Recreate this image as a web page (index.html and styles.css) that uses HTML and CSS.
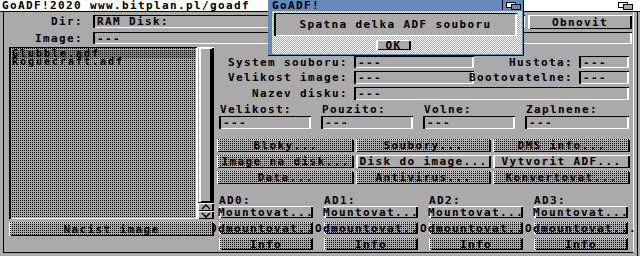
FILE: index.html
```html
<!DOCTYPE html>
<html lang="cs">
<head>
    <meta charset="UTF-8">
    <meta name="viewport" content="width=device-width, initial-scale=1.0">
    <title>GoADF!2020</title>
    <link rel="stylesheet" href="styles.css">
</head>
<body>
<div class="screen">

    <!-- Main window -->
    <div class="window main-window">
        <div class="titlebar">
            <span class="title">GoADF!2020 www.bitplan.pl/goadf</span>
            <span class="depth">
                <svg width="15" height="8" viewBox="0 0 15 8"><rect x="0.5" y="0.5" width="9" height="5" fill="#fff" stroke="#000"/><rect x="5.5" y="2.5" width="9" height="5" fill="#aaa" stroke="#000"/></svg>
            </span>
        </div>
        <div class="frame">
            <div class="body">

                <!-- Dir / Image -->
                <div class="top-grid">
                    <span class="lbl">Dir:</span>
                    <div class="dir-row">
                        <div class="field">RAM Disk:</div>
                        <div class="btn obnovit">Obnovit</div>
                    </div>
                    <span class="lbl">Image:</span>
                    <div class="field">---</div>
                </div>

                <div class="main-area">
                    <!-- File list -->
                    <div class="left-pane">
                        <div class="listview">
                            <div class="list">
                                <div class="item selected">Glubble.adf</div>
                                <div class="item">Roguecraft.adf</div>
                            </div>
                            <div class="scroller">
                                <div class="track"><div class="knob"></div></div>
                                <div class="arrow">
                                    <svg width="10" height="6" viewBox="0 0 10 6"><polyline points="1,5 5,1 9,5" fill="none" stroke="#000" stroke-width="1.5"/></svg>
                                </div>
                                <div class="arrow">
                                    <svg width="10" height="6" viewBox="0 0 10 6"><polyline points="1,1 5,5 9,1" fill="none" stroke="#000" stroke-width="1.5"/></svg>
                                </div>
                            </div>
                        </div>
                        <div class="btn ghost load">Nacist image</div>
                    </div>

                    <!-- Disk info -->
                    <div class="right-pane">
                        <div class="info-grid">
                            <span class="lbl">System souboru:</span>
                            <div class="field">---</div>
                            <span class="lbl">Hustota:</span>
                            <div class="field">---</div>

                            <span class="lbl">Velikost image:</span>
                            <div class="field">---</div>
                            <span class="lbl">Bootovatelne:</span>
                            <div class="field">---</div>

                            <span class="lbl">Nazev disku:</span>
                            <div class="field wide">---</div>
                        </div>

                        <div class="sizes">
                            <span class="cap">Velikost:</span>
                            <span class="cap">Pouzito:</span>
                            <span class="cap">Volne:</span>
                            <span class="cap">Zaplnene:</span>
                            <div class="field">---</div>
                            <div class="field">---</div>
                            <div class="field">---</div>
                            <div class="field">---</div>
                        </div>

                        <div class="actions">
                            <div class="btn ghost">Bloky...</div>
                            <div class="btn ghost">Soubory...</div>
                            <div class="btn ghost">DMS info...</div>
                            <div class="btn ghost">Image na disk...</div>
                            <div class="btn">Disk do image...</div>
                            <div class="btn">Vytvorit ADF...</div>
                            <div class="btn ghost">Data...</div>
                            <div class="btn ghost">Antivirus...</div>
                            <div class="btn ghost">Konvertovat...</div>
                        </div>

                        <div class="drives">
                            <div class="drive">
                                <span class="cap">AD0:</span>
                                <div class="btn">Mountovat...</div>
                                <div class="btn ghost">Odmountovat...</div>
                                <div class="btn ghost">Info</div>
                            </div>
                            <div class="drive">
                                <span class="cap">AD1:</span>
                                <div class="btn">Mountovat...</div>
                                <div class="btn ghost">Odmountovat...</div>
                                <div class="btn ghost">Info</div>
                            </div>
                            <div class="drive">
                                <span class="cap">AD2:</span>
                                <div class="btn">Mountovat...</div>
                                <div class="btn ghost">Odmountovat...</div>
                                <div class="btn ghost">Info</div>
                            </div>
                            <div class="drive">
                                <span class="cap">AD3:</span>
                                <div class="btn">Mountovat...</div>
                                <div class="btn ghost">Odmountovat...</div>
                                <div class="btn ghost">Info</div>
                            </div>
                        </div>
                    </div>
                </div>

            </div>
        </div>
    </div>

    <!-- Requester -->
    <div class="window dialog">
        <div class="dlg-title">
            <span class="title">GoADF!</span>
            <span class="dlg-depth">
                <svg width="15" height="8" viewBox="0 0 15 8"><rect x="0.5" y="0.5" width="9" height="5" fill="#fff" stroke="#000"/><rect x="5.5" y="2.5" width="9" height="5" fill="#6688bb" stroke="#000"/></svg>
            </span>
        </div>
        <div class="dlg-body">
            <div class="message">Spatna delka ADF souboru</div>
            <div class="btn ok">OK</div>
        </div>
    </div>

</div>
</body>
</html>
```

FILE: styles.css
```css
/* Amiga Workbench look: topaz-like mono font, 4 colour palette */
* {
    margin: 0;
    padding: 0;
    box-sizing: border-box;
}

body {
    background: #aaaaaa;
    color: #000;
    font-family: "DejaVu Sans Mono", "Liberation Mono", monospace;
    font-weight: bold;
    font-size: 11px;
    letter-spacing: 1.38px;
    line-height: 9px;
    overflow: hidden;
}

.screen {
    position: relative;
    width: 640px;
    height: 256px;
    background: #aaaaaa;
    overflow: hidden;
}

.window {
    position: absolute;
    top: 0;
}

/* Main window */
.main-window {
    left: 0;
    width: 640px;
    height: 256px;
}

.titlebar {
    display: flex;
    justify-content: space-between;
    height: 12px;
    padding: 1px 7px 0 2px;
    background: #fff;
    border-bottom: 1px solid #000;
    white-space: nowrap;
}

.depth {
    display: flex;
    padding-top: 1px;
}

.frame {
    width: 638px;
    height: 244px;
    border-right: 1px solid #000;
}

.body {
    height: 241px;
    margin: 0 3px;
    border-left: 1px solid #000;
    border-right: 1px solid #fff;
    border-bottom: 1px solid #000;
}

/* Shared gadgets */
.btn {
    position: relative;
    display: flex;
    align-items: center;
    justify-content: center;
    white-space: nowrap;
    background: #aaaaaa;
    box-shadow: inset 2px 1px #fff, inset -2px -1px #000;
}

.ghost::after {
    content: "";
    position: absolute;
    inset: 0;
    background: conic-gradient(#000 0 25%, transparent 0) 0 0 / 2px 2px;
}

.field {
    display: flex;
    align-items: center;
    padding-left: 4px;
    white-space: nowrap;
    overflow: hidden;
    box-shadow: inset 2px 1px #000, inset -2px -1px #fff;
}

.lbl {
    display: flex;
    align-items: center;
    justify-content: flex-end;
    white-space: nowrap;
}

.cap {
    white-space: nowrap;
    padding-left: 1px;
}

/* Dir / Image rows */
.top-grid {
    display: grid;
    grid-template-columns: 89px 1fr;
    grid-template-rows: 13px 12px;
    row-gap: 4px;
    padding: 3px 1px 0 0;
}

.top-grid .lbl {
    padding-right: 10px;
}

.dir-row {
    display: flex;
    gap: 3px;
}

.dir-row .field {
    flex: 1;
}

.obnovit {
    width: 104px;
    height: 14px;
}

.main-area {
    display: flex;
    gap: 3px;
    margin-top: 3px;
    padding-left: 5px;
}

/* Left pane: file list */
.left-pane {
    position: relative;
    z-index: 1;
    width: 205px;
    display: flex;
    flex-direction: column;
    gap: 3px;
}

.listview {
    display: flex;
    height: 172px;
}

.list {
    position: relative;
    flex: 1;
    padding: 3px 1px 0 3px;
    font-size: 10px;
    letter-spacing: 1.98px;
    line-height: 8px;
    box-shadow: inset 2px 1px #000, inset -1px -1px #fff;
}

.list::after {
    content: "";
    position: absolute;
    inset: 1px 1px 1px 2px;
    background: conic-gradient(#000 0 25%, transparent 0) 0 0 / 2px 2px;
}

.item {
    height: 8px;
    white-space: nowrap;
}

.item.selected {
    background: #6688bb;
}

.scroller {
    width: 17px;
    display: flex;
    flex-direction: column;
}

.track {
    flex: 1;
    padding: 1px 2px;
    box-shadow: inset 1px 1px #fff, inset -2px -1px #000;
}

.knob {
    height: 100%;
    box-shadow: inset 2px 1px #fff, inset -2px -1px #000;
}

.arrow {
    height: 8px;
    display: flex;
    align-items: center;
    justify-content: center;
    box-shadow: inset 2px 1px #fff, inset -2px -1px #000;
}

.load {
    height: 14px;
}

/* Right pane: disk info */
.right-pane {
    flex: 1;
}

.info-grid {
    display: grid;
    grid-template-columns: 137px 120px 105px 50px;
    grid-template-rows: 12px 13px 13px;
    row-gap: 3px;
    margin-top: 9px;
}

.info-grid .lbl {
    padding-right: 6px;
}

.info-grid .wide {
    grid-column: 2 / 5;
}

.sizes {
    display: grid;
    grid-template-columns: 92px 92px 92px 1fr;
    grid-template-rows: 9px 13px;
    column-gap: 10px;
    row-gap: 2px;
    margin-top: 5px;
    padding: 0 4px 0 2px;
}

.actions {
    display: grid;
    grid-template-columns: 137px 135px 137px;
    grid-auto-rows: 13px;
    gap: 3px 2px;
    margin-top: 10px;
}

.drives {
    display: grid;
    grid-template-columns: repeat(4, 94px);
    column-gap: 11px;
    margin-top: 12px;
    padding-left: 2px;
}

.drive {
    display: flex;
    flex-direction: column;
    gap: 4px;
}

.drive .cap {
    height: 9px;
    margin-bottom: -3px;
    padding-left: 0;
}

.drive .btn {
    height: 12px;
}

/* Requester */
.dialog {
    left: 268px;
    width: 256px;
    height: 56px;
    background: #6688bb;
    border-right: 1px solid #000;
    border-bottom: 1px solid #000;
}

.dlg-title {
    display: flex;
    justify-content: space-between;
    height: 11px;
    padding: 1px 0 0 4px;
}

.dlg-depth {
    display: flex;
    justify-content: center;
    width: 21px;
    height: 10px;
    margin-top: -1px;
    padding-top: 2px;
    border-left: 1px solid #000;
}

.dlg-body {
    height: 43px;
    margin: 0 1px 0 4px;
    padding: 2px 5px 0 2px;
    background: conic-gradient(#fff 0 25%, #aaa 0 50%, #fff 0 75%, #aaa 0) 0 0 / 2px 2px;
}

.message {
    display: flex;
    align-items: center;
    justify-content: center;
    height: 23px;
    background: #aaaaaa;
    white-space: nowrap;
    box-shadow: inset 2px 1px #000, inset -2px -1px #fff;
}

.ok {
    width: 35px;
    height: 10px;
    margin: 4px 0 0 102px;
}
```
